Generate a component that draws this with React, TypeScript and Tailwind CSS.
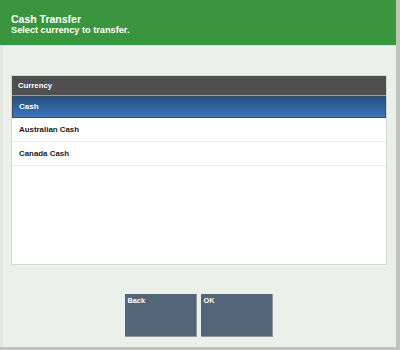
import React from "react";

export default function App() {
  const font = { fontFamily: '"Liberation Sans", Arial, sans-serif' };
  return (
    <div className="w-[400px] h-[350px] bg-[#ebf1ea] flex flex-col border-r-[4px] border-b-[3px] border-[#bfc4bf] overflow-hidden" style={font}>
      <div className="h-[45px] bg-[#3a953e] px-[11px] pt-[13px] flex flex-col text-white font-bold shrink-0">
        <div className="text-[10.5px] leading-[12px]">Cash Transfer</div>
        <div className="text-[9.2px] leading-[11px]">Select currency to transfer.</div>
      </div>
      <div className="flex-1 flex flex-col border-t border-[#d6dcd5] border-l-[3px] border-l-[#e2e8e1]">
        <div className="ml-[8px] mr-[9px] mt-[29px] h-[190px] bg-white border border-[#d3d7d3] flex flex-col">
          <div className="h-[20px] bg-[#4f4f4f] border-b-[1px] border-[#9a9a9a] flex items-center px-[6px] text-white font-bold text-[7.75px]">
            Currency
          </div>
          <div className="h-[22px] bg-gradient-to-b from-[#28507f] to-[#3b76bb] border border-[#3c4a5a] flex items-center px-[6px] text-white font-bold text-[8px]">
            Cash
          </div>
          <div className="h-[24px] border-b border-[#ececec] flex items-center px-[7px] text-[#1a1a1a] font-bold text-[7.9px]">
            Australian Cash
          </div>
          <div className="h-[24px] border-b border-[#ececec] flex items-center px-[7px] text-[#1a1a1a] font-bold text-[7.9px]">
            Canada Cash
          </div>
        </div>
        <div className="flex justify-center gap-[4px] mt-[29px] pr-[2px]">
          <div className="w-[72px] h-[43px] bg-[#536679] border-r border-b border-[#8d9aa6] px-[3px] pt-[2px] text-white font-bold text-[7.3px]">
            Back
          </div>
          <div className="w-[72px] h-[43px] bg-[#536679] border-r border-b border-[#8d9aa6] px-[3px] pt-[2px] text-white font-bold text-[7.3px]">
            OK
          </div>
        </div>
      </div>
    </div>
  );
}
